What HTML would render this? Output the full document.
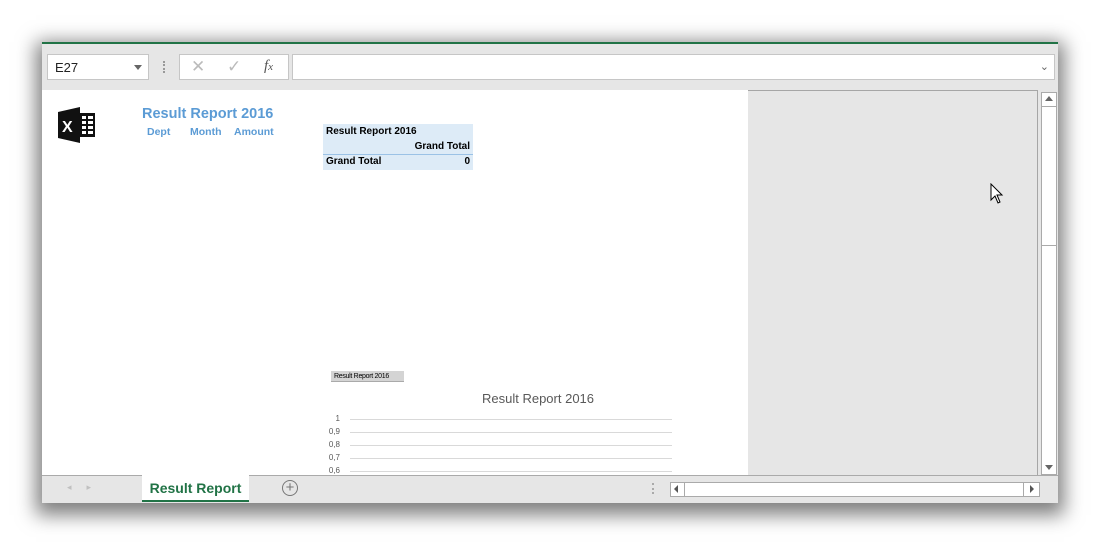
<!DOCTYPE html><html><head><style>
body{margin:0;width:1100px;height:546px;background:#fff;position:relative;overflow:hidden;font-family:"Liberation Sans",sans-serif}
.a{position:absolute}
.win{left:42px;top:42px;width:1016px;height:461px;background:#e6e6e6;box-shadow:0 6px 18px 6px rgba(0,0,0,.5);border-top:2px solid #217346;box-sizing:border-box}
.box{background:#fff;border:1px solid #c6c6c6;box-sizing:border-box}
.h{color:#5b9bd5;font-weight:bold;font-family:"Liberation Sans",sans-serif}
.g{height:1px;background:#d9d9d9;left:350px;width:322px}
.yl{font-size:8px;color:#595959;left:326px;width:14px;text-align:right;font-family:"Liberation Sans",sans-serif}
</style></head><body>
<div class="a win"></div>
<div class="a box" style="left:47px;top:54px;width:102px;height:26px;font-size:13px;padding:5px 7px;color:#222">E27<span class="a" style="left:86px;top:10px;border:4px solid transparent;border-top:5px solid #666"></span></div>
<div class="a" style="left:163px;top:61px;width:2px;height:12px;border-left:2px dotted #999"></div>
<div class="a box" style="left:179px;top:54px;width:110px;height:26px;color:#bbb;font-size:17px"><span class="a" style="left:11px;top:2px">✕</span><span class="a" style="left:47px;top:2px">✓</span><span class="a" style="left:84px;top:3px;color:#555;font-style:italic;font-family:'Liberation Serif';font-size:15px">f<span style="font-size:11px">x</span></span></div>
<div class="a box" style="left:292px;top:54px;width:763px;height:26px"><span class="a" style="right:5px;top:5px;color:#666;font-size:11px">⌄</span></div>
<div class="a" style="left:42px;top:90px;width:706px;height:385px;background:#fff"></div>
<div class="a" style="left:748px;top:90px;width:289px;height:384px;border:1px solid #a6a6a6;border-left:0;background:#e6e6e6"></div>
<svg class="a" style="left:58px;top:107px" width="38" height="36"><path d="M0 5 L22 0 V36 L0 31Z" fill="#111"/><rect x="22" y="6" width="15" height="24" fill="#111"/><text x="4" y="25" fill="#fff" font-family="Liberation Sans" font-weight="bold" font-size="16">X</text><g fill="#fff"><rect x="24" y="9" width="4" height="3"/><rect x="30" y="9" width="5" height="3"/><rect x="24" y="14" width="4" height="3"/><rect x="30" y="14" width="5" height="3"/><rect x="24" y="19" width="4" height="3"/><rect x="30" y="19" width="5" height="3"/><rect x="24" y="24" width="4" height="3"/><rect x="30" y="24" width="5" height="3"/></g></svg>
<div class="a h" style="left:142px;top:106px;font-size:14.5px">Result Report 2016</div>
<div class="a h" style="left:147px;top:126px;font-size:10.5px">Dept</div>
<div class="a h" style="left:190px;top:126px;font-size:10.5px">Month</div>
<div class="a h" style="left:234px;top:126px;font-size:10.5px">Amount</div>
<div class="a" style="left:323px;top:124px;width:150px;height:46px;background:#ddebf7;font-size:10px;font-weight:bold;font-family:'Liberation Sans',sans-serif">
<div class="a" style="left:3px;top:2px">Result Report 2016</div>
<div class="a" style="right:3px;top:17px">Grand Total</div>
<div class="a" style="left:0;top:30px;width:150px;height:1px;background:#9bc2e6"></div>
<div class="a" style="left:3px;top:32px">Grand Total</div><div class="a" style="right:3px;top:32px">0</div></div>
<div class="a" style="left:331px;top:371px;width:73px;height:11px;background:#d4d4d4;border-bottom:1px solid #aaa;font-size:7px;padding-left:3px;box-sizing:border-box;line-height:11px;font-family:'Liberation Sans';letter-spacing:-.3px">Result Report 2016</div>
<div class="a" style="left:482px;top:391px;font-size:13px;color:#595959;font-family:'Liberation Sans'">Result Report 2016</div>
<div class="a g" style="top:419px"></div><div class="a g" style="top:432px"></div><div class="a g" style="top:445px"></div><div class="a g" style="top:458px"></div><div class="a g" style="top:471px"></div>
<div class="a yl" style="top:414px">1</div><div class="a yl" style="top:427px">0,9</div><div class="a yl" style="top:440px">0,8</div><div class="a yl" style="top:453px">0,7</div><div class="a yl" style="top:466px">0,6</div>
<div class="a" style="left:1041px;top:92px;width:16px;height:383px;background:#fff;border:1px solid #aaa;box-sizing:border-box"></div>
<div class="a" style="left:1042px;top:106px;width:14px;height:140px;border:1px solid #aaa;border-left:0;border-right:0;box-sizing:border-box"></div>
<div class="a" style="left:1045px;top:96px;border:4px solid transparent;border-bottom:5px solid #666;border-top:0"></div>
<div class="a" style="left:1045px;top:465px;border:4px solid transparent;border-top:5px solid #666;border-bottom:0"></div>
<div class="a" style="left:42px;top:475px;width:1016px;height:1px;background:#aaa"></div>
<div class="a" style="left:142px;top:475px;width:107px;height:25px;background:#fff;border-bottom:2px solid #217346;color:#217346;font-weight:bold;font-size:14px;text-align:center;line-height:26px;font-family:'Liberation Sans'">Result Report</div>
<div class="a" style="left:67px;top:482px;color:#c0c0c0;font-size:9px">◂&nbsp;&nbsp;&nbsp;&nbsp;&nbsp;&nbsp;▸</div>
<div class="a" style="left:282px;top:480px;width:14px;height:14px;border:1.5px solid #777;border-radius:50%;color:#777;font-size:15px;line-height:13px;text-align:center">+</div>
<div class="a" style="left:652px;top:483px;width:2px;height:11px;border-left:2px dotted #aaa"></div>
<div class="a box" style="left:670px;top:482px;width:370px;height:15px;border-color:#aaa"></div>
<div class="a" style="left:684px;top:482px;width:1px;height:15px;background:#aaa"></div>
<div class="a" style="left:1023px;top:482px;width:1px;height:15px;background:#aaa"></div>
<div class="a" style="left:674px;top:485px;border:4px solid transparent;border-right:4px solid #555;border-left:0"></div>
<div class="a" style="left:1030px;top:485px;border:4px solid transparent;border-left:4px solid #555;border-right:0"></div>
<svg class="a" style="left:990px;top:183px" width="16" height="22"><path d="M1 1 V17 L5 13 L8 20 L10 19 L7 12 L12 12Z" fill="#fff" stroke="#000"/></svg>
</body></html>
